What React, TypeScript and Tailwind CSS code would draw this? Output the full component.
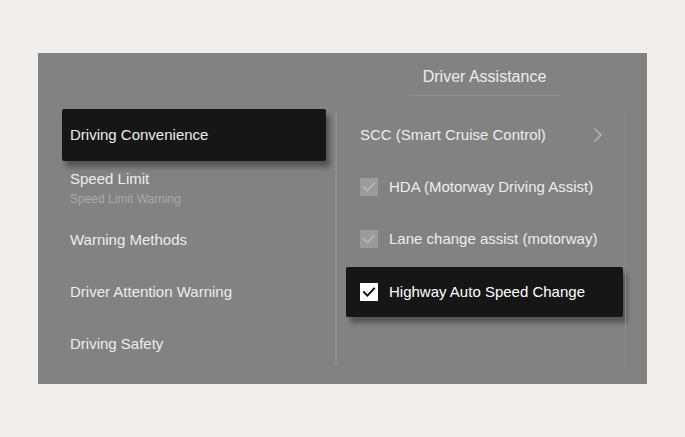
import React from "react";

const leftItems: { label: string; sub?: string }[] = [
  { label: "Driving Convenience" },
  { label: "Speed Limit", sub: "Speed Limit Warning" },
  { label: "Warning Methods" },
  { label: "Driver Attention Warning" },
  { label: "Driving Safety" },
];

function Check({ active }: { active?: boolean }) {
  return (
    <span
      className={`flex size-[18px] shrink-0 items-center justify-center ${
        active ? "bg-white" : "bg-[#9b9b9b]"
      }`}
    >
      <svg width="14" height="14" viewBox="0 0 14 14" fill="none">
        <path
          d="M2 7.2 L5.4 10.6 L12 3.6"
          stroke={active ? "#111" : "#b3b3b3"}
          strokeWidth="2"
          strokeLinecap="square"
        />
      </svg>
    </span>
  );
}

function Chevron() {
  return (
    <svg width="10" height="16" viewBox="0 0 10 16" fill="none">
      <polyline points="1.5,1.5 8,8 1.5,14.5" stroke="#b2b2b2" strokeWidth="1.6" />
    </svg>
  );
}

export default function App() {
  return (
    <div
      className="w-[685px] h-[437px] bg-[#f0efed] pt-[53px] pl-[38px]"
      style={{ fontFamily: '"Liberation Sans", Arial, sans-serif' }}
    >
      <div className="w-[609px] h-[331px] bg-[#828282] flex flex-col text-[#ededed]">
        {/* header */}
        <div className="h-[56px] pt-[13px] pl-[371px]">
          <div className="w-[151px] border-b border-[#8e8e8e] pb-[8px] text-center text-[16px] leading-[21px]">
            Driver Assistance
          </div>
        </div>

        {/* body */}
        <div className="flex flex-1">
          <div className="w-[297px] pl-[24px] pr-[9px]">
            {leftItems.map((it, i) => (
              <div
                key={it.label}
                className={`h-[52px] flex flex-col justify-center pl-[8px] ${
                  i === 0
                    ? "h-[51px] mb-px bg-[#161616] rounded-[2px] shadow-[4px_6px_5px_rgba(0,0,0,0.35)]"
                    : ""
                }`}
              >
                <div className="text-[15px] leading-[18px]">{it.label}</div>
                {it.sub && (
                  <div className="text-[12px] leading-[16px] mt-[3px] text-[#a8a8a8]">
                    {it.sub}
                  </div>
                )}
              </div>
            ))}
          </div>

          <div className="w-[2px] bg-[#8c8c8c] mt-[3px] h-[254px]" />

          <div className="w-[288px]">
            <div className="h-[52px] flex items-center justify-between pl-[23px] pr-[22px] text-[15px]">
              <span>SCC (Smart Cruise Control)</span>
              <Chevron />
            </div>
            <div className="h-[52px] flex items-center gap-[11px] pl-[23px] text-[15px]">
              <Check />
              <span>HDA (Motorway Driving Assist)</span>
            </div>
            <div className="h-[52px] flex items-center gap-[11px] pl-[23px] text-[15px]">
              <Check />
              <span>Lane change assist (motorway)</span>
            </div>
            <div className="h-[52px] pt-[2px]">
              <div className="ml-[9px] w-[277px] h-[50px] bg-[#161616] rounded-[2px] shadow-[4px_6px_5px_rgba(0,0,0,0.35)] flex items-center gap-[11px] pl-[14px] text-[15px] text-white">
                <Check active />
                <span>Highway Auto Speed Change</span>
              </div>
            </div>
          </div>

          <div className="w-px bg-[#8a8a8a] mt-[3px] h-[256px]" />
        </div>
      </div>
    </div>
  );
}
